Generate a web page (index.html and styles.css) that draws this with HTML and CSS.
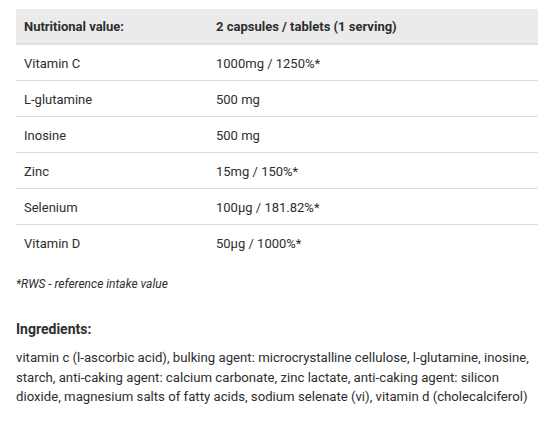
FILE: index.html
```html
<!DOCTYPE html>
<html>
<head>
<meta charset="utf-8">
<link rel="stylesheet" href="styles.css">
</head>
<body>
<div class="wrap">
  <table class="nutri">
    <thead>
      <tr><th>Nutritional value:</th><th>2 capsules / tablets (1 serving)</th></tr>
    </thead>
    <tbody>
      <tr><td>Vitamin C</td><td>1000mg / 1250%*</td></tr>
      <tr><td>L-glutamine</td><td>500 mg</td></tr>
      <tr><td>Inosine</td><td>500 mg</td></tr>
      <tr><td>Zinc</td><td>15mg / 150%*</td></tr>
      <tr><td>Selenium</td><td>100µg / 181.82%*</td></tr>
      <tr><td>Vitamin D</td><td>50µg / 1000%*</td></tr>
    </tbody>
  </table>
  <p class="note">*RWS - reference intake value</p>
  <h3 class="heading">Ingredients:</h3>
  <p class="ingr">vitamin c (l-ascorbic acid), bulking agent: microcrystalline cellulose, l-glutamine, inosine, starch, anti-caking agent: calcium carbonate, zinc lactate, anti-caking agent: silicon dioxide, magnesium salts of fatty acids, sodium selenate (vi), vitamin d (cholecalciferol)</p>
</div>
</body>
</html>
```
FILE: styles.css
```css
html, body { margin: 0; padding: 0; background: #fff; }
body { font-family: Roboto, "Liberation Sans", sans-serif; color: #2e2e2e; font-size: 13px; }
.wrap { padding: 9px 18px 0 16px; }
.nutri { width: 522px; border-collapse: collapse; }
.nutri th, .nutri td { text-align: left; padding: 1px 8px 0; height: 34px; border-bottom: 1px solid #dedede; }
.nutri th { background: #ebebeb; font-weight: 700; border-bottom: 2px solid #e0e0e0; height: 33px; }
.nutri th:first-child, .nutri td:first-child { width: 176px; }
.nutri tbody tr:last-child td { border-bottom: none; }
.note { margin: 17px 0 0; font-style: italic; font-size: 12px; }
.heading { margin: 30px 0 0; font-size: 14px; font-weight: 700; }
.ingr { margin: 11px 0 0; font-size: 13.2px; line-height: 19.5px; }
```
